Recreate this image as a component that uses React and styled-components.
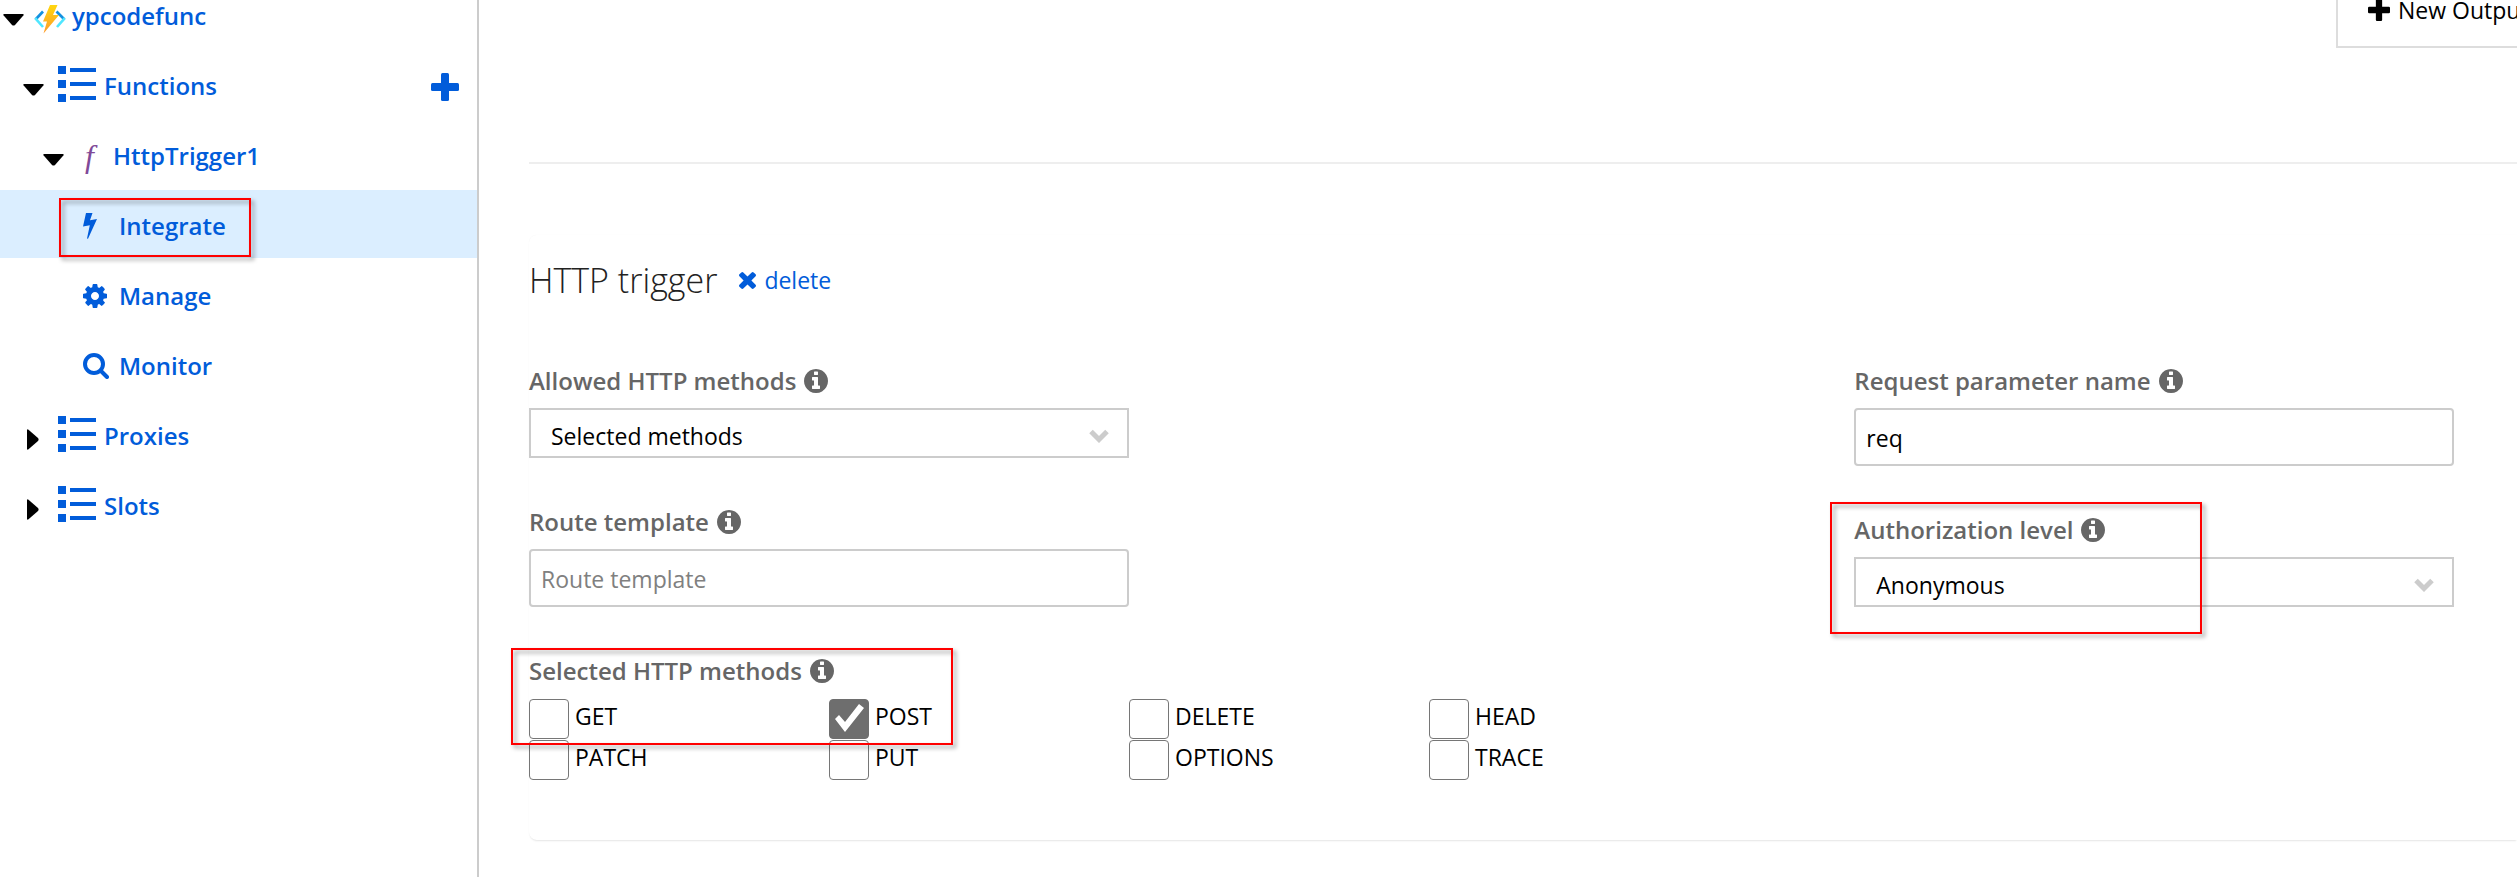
import React from 'react';
import styled, { createGlobalStyle, css } from 'styled-components';

const blue = '#015cda';
const line = '#cccccc';

const GlobalStyle = createGlobalStyle`
  * { box-sizing: border-box; }
  body {
    margin: 0;
    background: #fff;
    color: #000;
    font: 400 23px/34px "Open Sans", "Noto Sans", sans-serif;
  }
  button, input, select { font: inherit; color: inherit; }
  svg { flex: none; }
`;

const Page = styled.div`
  display: flex;
  min-height: 100vh;
  overflow: hidden;
`;

/* ---------- sidebar ---------- */

const Sidebar = styled.nav`
  flex: 0 0 479px;
  border-right: 2px solid ${line};
`;

const Tree = styled.ul`
  display: grid;
  grid-auto-rows: 68px;
  row-gap: 2px;
  margin: -20px 0 0;
  padding: 0;
  list-style: none;
`;

const levels = {
  app: { indent: 3, arrow: 31, icon: 38 },
  group: { indent: 23, arrow: 35, icon: 46 },
  func: { indent: 43, arrow: 37, icon: 33 },
  leaf: { indent: 83, arrow: 0, icon: 36 },
};

const Row = styled.li`
  position: relative;
  display: flex;
  align-items: center;
  padding: 0 18px 0 ${(p) => levels[p.$level].indent}px;
  background: ${(p) => (p.$active ? '#dbeeff' : 'transparent')};
`;

const IconButton = styled.button`
  display: flex;
  padding: 0;
  border: 0;
  background: none;
  color: ${blue};
  cursor: pointer;
`;

const AddButton = styled(IconButton)`
  padding-top: 6px;
`;

const Toggle = styled(IconButton)`
  width: ${(p) => levels[p.$level].arrow}px;
  padding: ${(p) => (p.$open ? '12px 0 0' : '10px 0 0 4px')};
  color: #000;
`;

const NodeLink = styled.a`
  flex: 1;
  display: flex;
  align-items: center;
  color: ${blue};
  font-size: 24px;
  font-weight: 600;
  text-decoration: none;
`;

const NodeIcon = styled.span`
  display: flex;
  flex: 0 0 ${(p) => levels[p.$level].icon}px;
  padding-top: ${(p) => (p.$level === 'app' ? 10 : p.$level === 'leaf' ? 3 : 0)}px;
`;

const NodeText = styled.span`
  padding-top: 3px;
`;

const FGlyph = styled.span`
  padding: 4px 0 0 5px;
  color: #804998;
  font: italic 400 32px/34px "Liberation Serif", serif;
`;

/* ---------- main ---------- */

const Main = styled.main`
  flex: 1;
  min-width: 0;
  padding-left: 50px;
`;

const Outputs = styled.section`
  display: flex;
  justify-content: flex-end;
  align-items: flex-start;
  height: 164px;
  margin-right: -39px;
  border-bottom: 2px solid #eeeeee;
`;

const OutputButton = styled.button`
  display: flex;
  align-items: center;
  gap: 8px;
  width: 220px;
  height: 76px;
  margin-top: -28px;
  padding: 0 0 0 30px;
  border: 2px solid #dddddd;
  background: #fff;
  white-space: nowrap;
`;

const Card = styled.section`
  margin-top: 71px;
  padding: 22px 0 60px;
  border-radius: 8px 0 0 8px;
  box-shadow: 0 2px 2px -1px rgba(0, 0, 0, 0.1), 0 0 1px rgba(0, 0, 0, 0.06);
`;

const CardHead = styled.header`
  display: flex;
  align-items: center;
  gap: 22px;
  margin-bottom: 62px;
`;

const Title = styled.h2`
  margin: 0;
  color: #222;
  font-size: 34px;
  font-weight: 300;
  line-height: 46px;
`;

const DeleteButton = styled(IconButton)`
  align-items: center;
  gap: 8px;
`;

const Form = styled.form`
  display: grid;
  grid-template-columns: 2fr 1fr;
`;

const Column = styled.div`
  display: flex;
  flex-direction: column;
  gap: 48px;
`;

const Field = styled.div`
  position: relative;
`;

const labelStyle = css`
  display: flex;
  align-items: center;
  gap: 8px;
  margin-bottom: 11px;
  padding: 0;
  color: #666666;
  font-size: 24px;
  font-weight: 600;
  line-height: 32px;
`;

const Label = styled.label`
  ${labelStyle}
`;

const Legend = styled.div`
  ${labelStyle}
  margin-bottom: 12px;
`;

const TextInput = styled.input`
  display: block;
  width: 100%;
  max-width: 600px;
  height: 58px;
  padding: 2px 10px 0;
  border: 2px solid ${line};
  border-radius: 4px;
  background: #fff;
  &::placeholder { color: #808080; opacity: 1; }
`;

const SelectWrap = styled.div`
  position: relative;
  max-width: 600px;
  svg {
    position: absolute;
    right: 20px;
    top: 21px;
    color: ${line};
    pointer-events: none;
  }
`;

const SelectBox = styled.select`
  display: block;
  width: 100%;
  height: 50px;
  padding: 6px 48px 0 20px;
  border: 2px solid ${line};
  border-radius: 0;
  background: #fff;
  appearance: none;
`;

const Methods = styled.div`
  display: grid;
  grid-template-columns: repeat(4, 300px);
  row-gap: 1px;
`;

const Method = styled.label`
  display: flex;
  align-items: flex-start;
  gap: 6px;
`;

const Checkbox = styled.input`
  width: 40px;
  height: 40px;
  margin: 0;
  border: 1px solid #767676;
  border-radius: 4px;
  background: #fff;
  appearance: none;
  &:checked { background: #6e6e6e; border-color: #6e6e6e; }
  &:checked::before {
    content: "";
    display: block;
    width: 38px;
    height: 38px;
    background: #fff;
    clip-path: polygon(5px 19px, 9px 15px, 15px 22px, 29px 4px, 34px 8px, 15px 32px);
  }
`;

const Callout = styled.span`
  position: absolute;
  top: ${(p) => p.$top}px;
  left: ${(p) => p.$left}px;
  width: ${(p) => p.$width}px;
  height: ${(p) => p.$height}px;
  border: 2px solid #ff0000;
  filter: drop-shadow(3px 3px 2px rgba(0, 0, 0, 0.4));
  pointer-events: none;
`;

/* ---------- icons ---------- */

const Svg = ({ w, h, box, children }) => (
  <svg width={w} height={h} viewBox={box || `0 0 ${w} ${h}`} fill="currentColor" aria-hidden="true">{children}</svg>
);

const ArrowDown = () => <Svg w={21} h={12}><path d="M1 0H20Q21 .3 20.500 1.200L12 11Q10.500 12.200 9 11L.5 1.200Q0 .3 1 0Z" /></Svg>;
const ArrowRight = () => <Svg w={12} h={21}><path d="M0 1Q.3 0 1.200 .5L11 9Q12.200 10.500 11 12L1.200 20.500Q.3 21 0 20Z" /></Svg>;

const ListIcon = () => (
  <Svg w={38} h={36}>
    {[0, 14, 28].map((y) => (
      <g key={y}>
        <rect x="0" y={y} width="8" height="8" />
        <rect x="12" y={y + 2} width="26" height="4" />
      </g>
    ))}
  </Svg>
);

const AzureIcon = () => (
  <Svg w={32} h={29}>
    <defs>
      <linearGradient id="bolt" x1="0" y1="0" x2="0" y2="1">
        <stop offset="0" stopColor="#ffd70f" />
        <stop offset="1" stopColor="#fe9a2b" />
      </linearGradient>
    </defs>
    <g fill="none" strokeWidth="2.600">
      <path d="M9 6.500 1.500 14.500" stroke="#1490df" />
      <path d="M1.200 13.200 9 22" stroke="#50e6ff" />
      <path d="M22.500 6.500 30.500 14.500" stroke="#1490df" />
      <path d="M30.800 13.200 23 22" stroke="#50e6ff" />
    </g>
    <path d="M16 0H23.500L19 10H25L9.500 28.500 13 16.500H9Z" fill="url(#bolt)" />
  </Svg>
);

const BoltIcon = () => <Svg w={14} h={26}><path d="M3 0H9.500L7 7.200 14 6 5 25.800 4 25.400 6.800 12.200 0 13.400Z" /></Svg>;

const GearIcon = () => (
  <Svg w={24} h={24} box="0 128 1536 1536">
    <path d="M1024 896q0-106-75-181t-181-75-181 75-75 181 75 181 181 75 181-75 75-181zm512-109v222q0 12-8 23t-20 13l-185 28q-19 54-39 91 35 50 107 138 10 12 10 25t-9 23q-27 37-99 108t-94 71q-12 0-26-9l-138-108q-44 23-91 38-16 136-29 186-7 28-36 28h-222q-14 0-24.500-8.500t-11.500-21.500l-28-184q-49-16-90-37l-141 107q-10 9-25 9-14 0-25-11-126-114-165-168-7-10-7-23 0-12 8-23 15-21 51-66.500t54-70.500q-27-50-41-99l-183-27q-13-2-21-12.500t-8-23.500v-222q0-12 8-23t19-13l186-28q14-46 39-92-40-57-107-138-10-12-10-24 0-10 9-23 26-36 98.500-107.500t94.500-71.500q13 0 26 10l138 107q44-23 91-38 16-136 29-186 7-28 36-28h222q14 0 24.500 8.500t11.500 21.500l28 184q49 16 90 37l142-107q9-9 24-9 13 0 25 10 129 119 165 170 7 8 7 22 0 12-8 23-15 21-51 66.500t-54 70.500q26 50 41 98l183 28q13 2 21 12.500t8 23.500z" />
  </Svg>
);

const SearchIcon = () => (
  <Svg w={26} h={26}>
    <g fill="none" stroke="currentColor" strokeWidth="4" strokeLinecap="round">
      <circle cx="11" cy="11" r="9" />
      <path d="M18 18 24 24" />
    </g>
  </Svg>
);

const PlusIcon = ({ size }) => (
  <Svg w={size} h={size} box="0 0 28 28">
    <rect x="10" width="8" height="28" rx="1.500" />
    <rect y="10" width="28" height="8" rx="1.500" />
  </Svg>
);

const TimesIcon = () => (
  <Svg w={17} h={17} box="110 366 1188 1188">
    <path d="M1298 1322q0 40-28 68l-136 136q-28 28-68 28t-68-28l-294-294-294 294q-28 28-68 28t-68-28l-136-136q-28-28-28-68t28-68l294-294-294-294q-28-28-28-68t28-68l136-136q28-28 68-28t68 28l294 294 294-294q28-28 68-28t68 28l136 136q28 28 28 68t-28 68l-294 294 294 294q28 28 28 68z" />
  </Svg>
);

const InfoIcon = () => (
  <Svg w={24} h={24} box="0 128 1536 1536">
    <path d="M1024 1376v-160q0-14-9-23t-23-9h-96v-512q0-14-9-23t-23-9h-320q-14 0-23 9t-9 23v160q0 14 9 23t23 9h96v320h-96q-14 0-23 9t-9 23v160q0 14 9 23t23 9h448q14 0 23-9t9-23zm-128-896v-160q0-14-9-23t-23-9h-192q-14 0-23 9t-9 23v160q0 14 9 23t23 9h192q14 0 23-9t9-23zm640 416q0 209-103 385.500t-279.500 279.500-385.500 103-385.500-103-279.500-279.500-103-385.500 103-385.500 279.500-279.500 385.500-103 385.500 103 279.500 279.500 103 385.500z" />
  </Svg>
);

const ChevronIcon = () => (
  <Svg w={20} h={14}>
    <path d="M2 2.500 10 10.500 18 2.500" fill="none" stroke="currentColor" strokeWidth="5" />
  </Svg>
);

/* ---------- parts ---------- */

const TreeNode = ({ level, icon, text, open, active, children }) => (
  <Row $level={level} $active={active}>
    {level !== 'leaf' && (
      <Toggle type="button" $level={level} $open={open} aria-expanded={open} aria-label={text}>
        {open ? <ArrowDown /> : <ArrowRight />}
      </Toggle>
    )}
    <NodeLink href="#" aria-current={active ? 'page' : undefined}>
      <NodeIcon $level={level}>{icon}</NodeIcon>
      <NodeText>{text}</NodeText>
    </NodeLink>
    {children}
  </Row>
);

const Select = ({ id, label, value, callout }) => (
  <Field>
    <Label htmlFor={id}>{label}<InfoIcon /></Label>
    <SelectWrap>
      <SelectBox id={id} defaultValue={value}><option>{value}</option></SelectBox>
      <ChevronIcon />
    </SelectWrap>
    {callout}
  </Field>
);

const Text = ({ id, label, ...rest }) => (
  <Field>
    <Label htmlFor={id}>{label}<InfoIcon /></Label>
    <TextInput id={id} type="text" {...rest} />
  </Field>
);

const methods = ['GET', 'POST', 'DELETE', 'HEAD', 'PATCH', 'PUT', 'OPTIONS', 'TRACE'];

export default function App() {
  return (
    <Page>
      <GlobalStyle />
      <Sidebar>
        <Tree>
          <TreeNode level="app" icon={<AzureIcon />} text="ypcodefunc" open />
          <TreeNode level="group" icon={<ListIcon />} text="Functions" open>
            <AddButton type="button" aria-label="New function"><PlusIcon size={28} /></AddButton>
          </TreeNode>
          <TreeNode level="func" icon={<FGlyph aria-hidden="true">f</FGlyph>} text="HttpTrigger1" open />
          <TreeNode level="leaf" icon={<BoltIcon />} text="Integrate" active>
            <Callout $top={8} $left={59} $width={192} $height={59} />
          </TreeNode>
          <TreeNode level="leaf" icon={<GearIcon />} text="Manage" />
          <TreeNode level="leaf" icon={<SearchIcon />} text="Monitor" />
          <TreeNode level="group" icon={<ListIcon />} text="Proxies" open={false} />
          <TreeNode level="group" icon={<ListIcon />} text="Slots" open={false} />
        </Tree>
      </Sidebar>
      <Main>
        <Outputs>
          <OutputButton type="button"><PlusIcon size={22} />New Output</OutputButton>
        </Outputs>
        <Card>
          <CardHead>
            <Title>HTTP trigger</Title>
            <DeleteButton type="button"><TimesIcon />delete</DeleteButton>
          </CardHead>
          <Form>
            <Column>
              <Select id="allowed" label="Allowed HTTP methods" value="Selected methods" />
              <Text id="route" label="Route template" placeholder="Route template" />
              <Field role="group" aria-labelledby="methods">
                <Legend id="methods">Selected HTTP methods<InfoIcon /></Legend>
                <Methods>
                  {methods.map((m) => (
                    <Method key={m}><Checkbox type="checkbox" defaultChecked={m === 'POST'} />{m}</Method>
                  ))}
                </Methods>
                <Callout $top={-7} $left={-18} $width={442} $height={97} />
              </Field>
            </Column>
            <Column>
              <Text id="param" label="Request parameter name" defaultValue="req" />
              <Select
                id="auth"
                label="Authorization level"
                value="Anonymous"
                callout={<Callout $top={-12} $left={-24} $width={372} $height={132} />}
              />
            </Column>
          </Form>
        </Card>
      </Main>
    </Page>
  );
}
